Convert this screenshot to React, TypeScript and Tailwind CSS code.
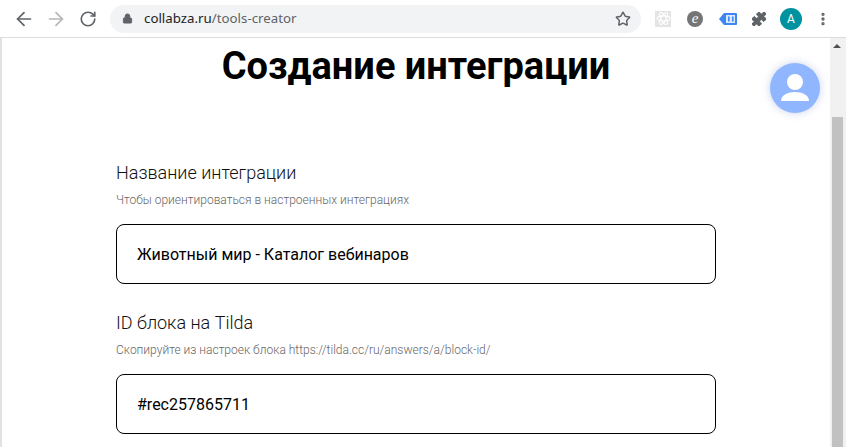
import React from 'react';
import { ArrowLeft, ArrowRight, RotateCw, Lock, Star, Puzzle, EllipsisVertical } from 'lucide-react';

const Field: React.FC<{ label: string; hint: string; value: string }> = ({ label, hint, value }) => (
  <div className="flex flex-col">
    <div className="text-[18px] leading-[24px] font-light text-[#111] h-[24px]">{label}</div>
    <div className="mt-[7px] text-[12px] leading-[16px] font-light text-[#666] h-[16px]">{hint}</div>
    <div className="mt-[16px] h-[60px] w-[600px] rounded-[8px] border border-black flex items-center pl-[20px] pt-[2px] text-[16px] text-black">
      {value}
    </div>
  </div>
);

const App: React.FC = () => {
  return (
    <div className="w-[846px] h-[447px] overflow-hidden flex flex-col bg-white font-['Roboto',sans-serif]">
      {/* Browser toolbar */}
      <div className="h-[38px] shrink-0 flex items-center bg-white border-b border-[#dadce0] pl-[2px]">
        <div className="flex items-center pl-[11px] text-[#5f6368]">
          <ArrowLeft className="w-[22px] h-[22px]" strokeWidth={1.9} />
          <ArrowRight className="ml-[10px] w-[22px] h-[22px] text-[#b4b6b9]" strokeWidth={1.9} />
          <RotateCw className="ml-[12px] w-[18px] h-[18px]" strokeWidth={2.2} />
        </div>
        <div className="ml-[13px] w-[531px] h-[28px] rounded-full bg-[#f1f3f4] flex items-center pl-[12px] pr-[10px]">
          <Lock className="w-[11px] h-[11px] text-[#5f6368] fill-[#5f6368]" strokeWidth={2} />
          <span className="ml-[11px] text-[13.3px] font-['Noto_Sans',sans-serif] text-[#202124]">
            collabza.ru<span className="text-[#5f6368]">/tools-creator</span>
          </span>
          <Star className="ml-auto w-[16px] h-[16px] text-[#5f6368]" strokeWidth={2.2} />
        </div>
        <div className="ml-[14px] w-[16px] h-[16px] bg-[#e4e4e4] flex items-center justify-center">
          <svg viewBox="0 0 16 16" className="w-[15px] h-[15px]" fill="none" stroke="#fff" strokeWidth="1.1">
            <ellipse cx="8" cy="8" rx="7" ry="2.8" />
            <ellipse cx="8" cy="8" rx="7" ry="2.8" transform="rotate(60 8 8)" />
            <ellipse cx="8" cy="8" rx="7" ry="2.8" transform="rotate(120 8 8)" />
          </svg>
        </div>
        <div className="ml-[16px] w-[16px] h-[16px] rounded-full bg-[#757575] flex items-center justify-center text-white text-[15px] italic font-['Liberation_Serif',serif] leading-none">
          e
        </div>
        <svg viewBox="0 0 18 14" className="ml-[16px] w-[18px] h-[14px]">
          <path d="M5 1h12a1 1 0 0 1 1 1v10a1 1 0 0 1-1 1H5L0 7z" fill="#3f87f0" />
          <rect x="7" y="3" width="9" height="8" fill="#dbe8fc" />
          <rect x="9" y="4.5" width="1.6" height="5" fill="#3f87f0" />
          <rect x="13" y="4.5" width="1.6" height="5" fill="#3f87f0" />
        </svg>
        <Puzzle className="ml-[14px] w-[16px] h-[16px] text-[#5f6368] fill-[#5f6368]" strokeWidth={1.5} />
        <div className="ml-[13px] w-[22px] h-[22px] rounded-full bg-[#00939f] flex items-center justify-center text-white text-[12px]">
          A
        </div>
        <EllipsisVertical className="ml-[13px] w-[16px] h-[16px] text-[#5f6368]" strokeWidth={3} />
      </div>

      {/* Page area */}
      <div className="flex-1 flex min-h-0">
        <div className="w-[2px] shrink-0 bg-[#e2e2e2]" />
        <main className="relative flex-1 min-w-0 flex flex-col pl-[114px]">
          <h1 className="w-[600px] text-center text-[38px] leading-[42px] font-bold text-black mt-[7px]">
            Создание интеграции
          </h1>
          <div className="mt-[74px] flex flex-col gap-[27px]">
            <Field
              label="Название интеграции"
              hint="Чтобы ориентироваться в настроенных интеграциях"
              value="Животный мир - Каталог вебинаров"
            />
            <Field
              label="ID блока на Tilda"
              hint="Скопируйте из настроек блока https://tilda.cc/ru/answers/a/block-id/"
              value="#rec257865711"
            />
          </div>
          {/* Floating profile button */}
          <div className="absolute left-[768px] top-[25px] w-[50px] h-[50px] rounded-full bg-[#8fb6ff] shadow-[0_0_8px_rgba(100,130,200,0.35)] flex items-center justify-center">
            <svg viewBox="0 0 30 30" className="w-[30px] h-[30px]" fill="#fff">
              <circle cx="15" cy="9" r="8" />
              <path d="M1 28c0-6 7-9 14-9s14 3 14 9z" />
            </svg>
          </div>
        </main>
        {/* Scrollbar */}
        <div className="w-[16px] shrink-0 bg-[#f1f1f1] flex flex-col">
          <div className="h-[15px] flex items-center justify-center pr-[2px]">
            <div className="w-0 h-0 border-l-[4px] border-r-[4px] border-b-[4px] border-l-transparent border-r-transparent border-b-[#505050]" />
          </div>
          <div className="mt-[64px] ml-[2px] w-[11px] flex-1 bg-[#c1c1c1]" />
        </div>
      </div>
    </div>
  );
};

export default App;
